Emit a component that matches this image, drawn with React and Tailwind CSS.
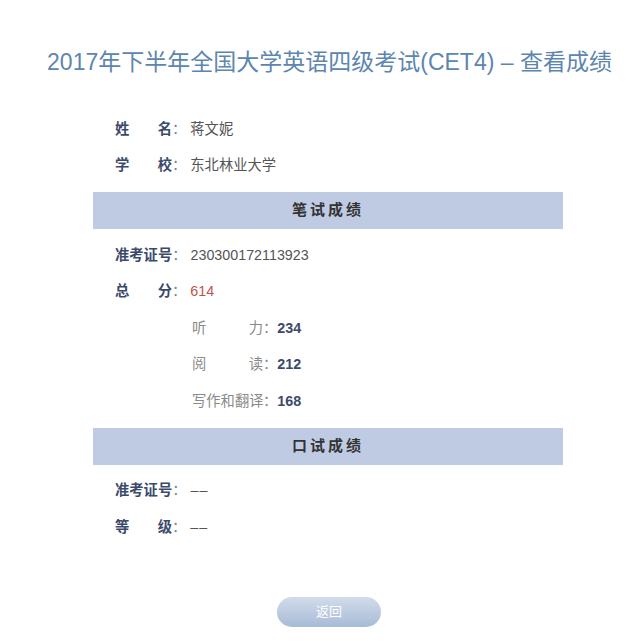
const FONT = { fontFamily: '"Liberation Sans", "Noto Sans CJK SC", sans-serif' };

function Spread({ chars, w }) {
  return (
    <span className={`flex justify-between ${w}`}>
      {chars.split("").map((c, i) => (
        <span key={i}>{c}</span>
      ))}
    </span>
  );
}

function Row({ label, spread, children }) {
  return (
    <div className="flex items-center h-[36.5px] pl-[22px] text-[14.3px]">
      <span className="flex font-bold text-[#3b4a6b]">
        {spread ? <Spread chars={label} w="w-[57px]" /> : <span>{label}</span>}
        <span className="font-normal text-[#7a8499]">：</span>
      </span>
      <span className="ml-[4px] text-[#555]">{children}</span>
    </div>
  );
}

function SubRow({ label, value }) {
  return (
    <div className="flex items-center h-[36.5px] pl-[99px] text-[14.3px]">
      <span className="flex text-[#8a8a8a]">
        <Spread chars={label} w="w-[71px]" />
        <span>：</span>
      </span>
      <span className="font-bold text-[#3b4a6b]">{value}</span>
    </div>
  );
}

function Bar({ title }) {
  return (
    <div className="flex items-center justify-center h-[37px] bg-[#bfcbe3] text-[15px] font-bold text-[#333] tracking-[0.2em]">
      {title}
    </div>
  );
}

export default function App() {
  return (
    <div className="w-[641px] h-[641px] bg-white overflow-hidden" style={FONT}>
      <div className="pt-[47px] pl-[18px] h-[30px] box-content flex items-center justify-center text-[23px] leading-[30px] text-[#5c86b0]">
        2017年下半年全国大学英语四级考试(CET4) – 查看成绩
      </div>

      <div className="ml-[93px] w-[470px] mt-[34px]">
        <Row label="姓名" spread>蒋文妮</Row>
        <Row label="学校" spread>东北林业大学</Row>

        <div className="mt-[8px] mb-[8px]">
          <Bar title="笔试成绩" />
        </div>

        <Row label="准考证号">230300172113923</Row>
        <Row label="总分" spread>
          <span className="text-[#c0504d]">614</span>
        </Row>
        <SubRow label="听力" value="234" />
        <SubRow label="阅读" value="212" />
        <SubRow label="写作和翻译" value="168" />

        <div className="mt-[8px] mb-[8px]">
          <Bar title="口试成绩" />
        </div>

        <Row label="准考证号"><span className="tracking-[1px]">––</span></Row>
        <Row label="等级" spread><span className="tracking-[1px]">––</span></Row>
      </div>

      <div className="flex justify-center mt-[51px] pl-[17px]">
        <button className="w-[104px] h-[30px] rounded-full bg-gradient-to-b from-[#cdd9ea] to-[#9fb4d2] text-white text-[13px] opacity-90">
          返回
        </button>
      </div>
    </div>
  );
}
